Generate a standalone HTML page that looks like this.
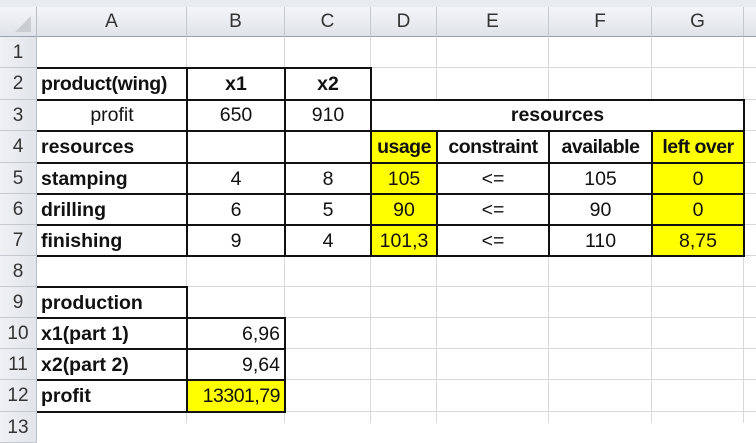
<!DOCTYPE html><html><head><style>
body{margin:0;width:756px;height:423px;overflow:hidden;background:#fff;position:relative;font-family:"Liberation Sans",Arial,sans-serif}
div{position:absolute;box-sizing:border-box}
.h{background:linear-gradient(#f3f5f8,#dfe3e9);color:#333;font-size:19px;text-align:center;line-height:30px}
.gv{width:1px;background:#d8d8d8;top:37px;height:386px}
.gh{height:1px;background:#d8d8d8;left:37px;width:719px}
.y{background:#ffff00}
.t{font-size:19.5px;color:#111;line-height:31px;white-space:nowrap}
.b{font-weight:bold}
.c{text-align:center}.r{text-align:right;padding-right:5px}.l{padding-left:4px}
.k{background:#111}
.rh{left:0;width:37px;background:linear-gradient(90deg,#eef0f3,#e1e5ea);color:#333;font-size:19px;text-align:center;line-height:31px;border-bottom:1px solid #c4c9d0;border-right:1px solid #b8bec6}
</style></head><body>
<div style="left:0;top:0;width:756px;height:7px;background:#e8ebef"></div>
<div class="h" style="left:0;top:7px;width:37px;height:30px;border-right:1px solid #b8bec6;border-bottom:1px solid #9aa3ad"><svg width="37" height="30"><polygon points="31,9 31,25 15,25" fill="#c9cdd2"/></svg></div>
<div class="h" style="left:37px;top:7px;width:150px;height:30px;border-right:1px solid #c4c9d0;border-bottom:1px solid #9aa3ad">A</div>
<div class="h" style="left:187px;top:7px;width:98px;height:30px;border-right:1px solid #c4c9d0;border-bottom:1px solid #9aa3ad">B</div>
<div class="h" style="left:285px;top:7px;width:86px;height:30px;border-right:1px solid #c4c9d0;border-bottom:1px solid #9aa3ad">C</div>
<div class="h" style="left:371px;top:7px;width:66px;height:30px;border-right:1px solid #c4c9d0;border-bottom:1px solid #9aa3ad">D</div>
<div class="h" style="left:437px;top:7px;width:112px;height:30px;border-right:1px solid #c4c9d0;border-bottom:1px solid #9aa3ad">E</div>
<div class="h" style="left:549px;top:7px;width:103px;height:30px;border-right:1px solid #c4c9d0;border-bottom:1px solid #9aa3ad">F</div>
<div class="h" style="left:652px;top:7px;width:92px;height:30px;border-right:1px solid #c4c9d0;border-bottom:1px solid #9aa3ad">G</div>
<div class="h" style="left:744px;top:7px;width:12px;height:30px;border-bottom:1px solid #9aa3ad"></div>
<div class="rh" style="top:37px;height:31px">1</div>
<div class="rh" style="top:68px;height:32px">2</div>
<div class="rh" style="top:100px;height:31px">3</div>
<div class="rh" style="top:131px;height:32px">4</div>
<div class="rh" style="top:163px;height:31px">5</div>
<div class="rh" style="top:194px;height:31px">6</div>
<div class="rh" style="top:225px;height:31px">7</div>
<div class="rh" style="top:256px;height:31px">8</div>
<div class="rh" style="top:287px;height:31px">9</div>
<div class="rh" style="top:318px;height:31px">10</div>
<div class="rh" style="top:349px;height:31px">11</div>
<div class="rh" style="top:380px;height:32px">12</div>
<div class="rh" style="top:412px;height:31px">13</div>
<div class="gv" style="left:186px"></div><div class="gv" style="left:284px"></div><div class="gv" style="left:370px"></div><div class="gv" style="left:436px"></div><div class="gv" style="left:548px"></div><div class="gv" style="left:651px"></div><div class="gv" style="left:743px"></div>
<div class="gh" style="top:67px"></div><div class="gh" style="top:99px"></div><div class="gh" style="top:130px"></div><div class="gh" style="top:162px"></div><div class="gh" style="top:193px"></div><div class="gh" style="top:224px"></div><div class="gh" style="top:255px"></div><div class="gh" style="top:286px"></div><div class="gh" style="top:317px"></div><div class="gh" style="top:348px"></div><div class="gh" style="top:379px"></div><div class="gh" style="top:411px"></div>
<div class="y" style="left:371px;top:131px;width:66px;height:125px"></div>
<div class="y" style="left:652px;top:131px;width:92px;height:125px"></div>
<div class="y" style="left:187px;top:380px;width:98px;height:32px"></div>
<div style="left:371px;top:100px;width:373px;height:31px;background:#fff"></div>
<div class="k" style="left:37px;top:67px;width:335px;height:2px"></div>
<div class="k" style="left:37px;top:99px;width:708px;height:2px"></div>
<div class="k" style="left:37px;top:130px;width:708px;height:2px"></div>
<div class="k" style="left:37px;top:162px;width:708px;height:2px"></div>
<div class="k" style="left:37px;top:193px;width:708px;height:2px"></div>
<div class="k" style="left:37px;top:224px;width:708px;height:2px"></div>
<div class="k" style="left:37px;top:255px;width:708px;height:2px"></div>
<div class="k" style="left:186px;top:67px;width:2px;height:190px"></div>
<div class="k" style="left:284px;top:67px;width:2px;height:190px"></div>
<div class="k" style="left:370px;top:67px;width:2px;height:190px"></div>
<div class="k" style="left:436px;top:130px;width:2px;height:127px"></div>
<div class="k" style="left:548px;top:130px;width:2px;height:127px"></div>
<div class="k" style="left:651px;top:130px;width:2px;height:127px"></div>
<div class="k" style="left:743px;top:99px;width:2px;height:158px"></div>
<div class="k" style="left:37px;top:286px;width:151px;height:2px"></div>
<div class="k" style="left:37px;top:317px;width:249px;height:2px"></div>
<div class="k" style="left:37px;top:348px;width:249px;height:2px"></div>
<div class="k" style="left:37px;top:379px;width:249px;height:2px"></div>
<div class="k" style="left:37px;top:411px;width:249px;height:2px"></div>
<div class="k" style="left:186px;top:286px;width:2px;height:127px"></div>
<div class="k" style="left:284px;top:317px;width:2px;height:96px"></div>
<div class="t b l" style="left:37px;top:69px;letter-spacing:-0.3px">product(wing)</div>
<div class="t b c" style="left:187px;top:69px;width:98px">x1</div>
<div class="t b c" style="left:285px;top:69px;width:86px">x2</div>
<div class="t c" style="left:37px;top:100px;width:150px">profit</div>
<div class="t c" style="left:187px;top:100px;width:98px">650</div>
<div class="t c" style="left:285px;top:100px;width:86px">910</div>
<div class="t b c" style="left:371px;top:100px;width:373px">resources</div>
<div class="t b l" style="left:37px;top:132px">resources</div>
<div class="t b c" style="left:371px;top:132px;width:66px;letter-spacing:-0.5px">usage</div>
<div class="t b c" style="left:437px;top:132px;width:112px;letter-spacing:-0.5px">constraint</div>
<div class="t b c" style="left:549px;top:132px;width:103px;letter-spacing:-0.5px">available</div>
<div class="t b c" style="left:652px;top:132px;width:92px;letter-spacing:-0.5px">left over</div>
<div class="t b l" style="left:37px;top:164px">stamping</div>
<div class="t b l" style="left:37px;top:195px">drilling</div>
<div class="t b l" style="left:37px;top:226px">finishing</div>
<div class="t c" style="left:187px;top:164px;width:98px">4</div><div class="t c" style="left:285px;top:164px;width:86px">8</div>
<div class="t c" style="left:187px;top:195px;width:98px">6</div><div class="t c" style="left:285px;top:195px;width:86px">5</div>
<div class="t c" style="left:187px;top:226px;width:98px">9</div><div class="t c" style="left:285px;top:226px;width:86px">4</div>
<div class="t c" style="left:371px;top:164px;width:66px">105</div><div class="t c" style="left:437px;top:164px;width:112px">&lt;=</div><div class="t c" style="left:549px;top:164px;width:103px">105</div><div class="t c" style="left:652px;top:164px;width:92px">0</div>
<div class="t c" style="left:371px;top:195px;width:66px">90</div><div class="t c" style="left:437px;top:195px;width:112px">&lt;=</div><div class="t c" style="left:549px;top:195px;width:103px">90</div><div class="t c" style="left:652px;top:195px;width:92px">0</div>
<div class="t c" style="left:371px;top:226px;width:66px">101,3</div><div class="t c" style="left:437px;top:226px;width:112px">&lt;=</div><div class="t c" style="left:549px;top:226px;width:103px">110</div><div class="t c" style="left:652px;top:226px;width:92px">8,75</div>
<div class="t b l" style="left:37px;top:288px">production</div>
<div class="t b l" style="left:37px;top:319px">x1(part 1)</div>
<div class="t b l" style="left:37px;top:350px">x2(part 2)</div>
<div class="t b l" style="left:37px;top:381px">profit</div>
<div class="t r" style="left:187px;top:319px;width:98px">6,96</div>
<div class="t r" style="left:187px;top:350px;width:98px">9,64</div>
<div class="t r" style="left:187px;top:381px;width:98px;letter-spacing:-0.5px">13301,79</div>
</body></html>
